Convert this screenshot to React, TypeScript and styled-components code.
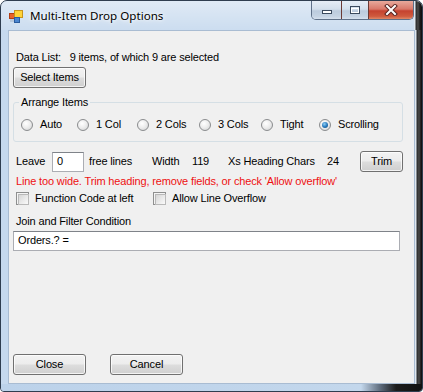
import React from "react";
import styled, { createGlobalStyle } from "styled-components";

const Global = createGlobalStyle`
  html, body { margin: 0; padding: 0; background: #ffffff; }
  * { box-sizing: border-box; }
`;

const Window = styled.div`
  width: 423px;
  height: 392px;
  border: 1px solid #2f3d4f;
  border-radius: 7px 7px 4px 4px;
  overflow: hidden;
  display: flex;
  flex-direction: column;
  background: #c6d9ee;
`;

const TitleBar = styled.div`
  height: 29px;
  display: flex;
  align-items: flex-start;
  background: linear-gradient(to bottom, rgba(255,255,255,0.45), rgba(255,255,255,0.1));
`;

const TitleIcon = styled.svg`
  width: 14px;
  height: 13px;
  margin: 9px 0 0 8px;
  flex: none;
`;

const TitleText = styled.div`
  font-family: "Noto Sans", "Open Sans", sans-serif;
  font-size: 11.6px;
  line-height: 16px;
  margin: 7px 0 0 7px;
  color: #000;
  text-shadow: 0 0 6px #ffffff, 0 0 3px #ffffff;
`;

const CaptionGroup = styled.div`
  margin-left: auto;
  display: flex;
  height: 19px;
  border: 1px solid #5f7088;
  border-top: none;
  border-radius: 0 0 5px 5px;
  overflow: hidden;
`;

const CaptionButton = styled.div<{ $w: number; $close?: boolean }>`
  width: ${(p) => p.$w}px;
  height: 100%;
  display: flex;
  align-items: center;
  justify-content: center;
  & + & { border-left: 1px solid ${(p) => (p.$close ? "#6b3a35" : "#8093ab")}; }
  background: ${(p) =>
    p.$close
      ? "linear-gradient(to bottom, #e8a99c 0%, #d9786a 45%, #c5422f 55%, #cf5a3e 85%, #e08866 100%)"
      : "linear-gradient(to bottom, #e6edf6 0%, #d3dfec 45%, #bccbdd 55%, #c5d3e3 85%, #d6e1ee 100%)"};
`;

const DarkEdge = styled.div<{ $w: number; $h?: number }>`
  width: ${(p) => p.$w}px;
  height: ${(p) => (p.$h ? `${p.$h}px` : "100%")};
  flex: none;
  align-self: stretch;
  background: linear-gradient(to right, #dfe8f1 0, #dfe8f1 1px, #2b2b2b 2px, #4a4a4a 4px, #1a1a1a 6px, #0c0c0c 100%);
`;

const Middle = styled.div`
  display: flex;
  height: 354px;
`;

const LeftFrame = styled.div`
  width: 7px;
  flex: none;
`;

const Client = styled.div`
  width: 407px;
  height: 354px;
  flex: none;
  background: #f0f0f0;
  border: 1px solid #a9bcd2;
  padding-left: 4px;
  display: flex;
  flex-direction: column;
  font-family: "Liberation Sans", Arial, sans-serif;
  font-size: 11px;
  letter-spacing: -0.15px;
  color: #000;
`;

const BottomFrame = styled.div`
  height: 7px;
  background: linear-gradient(to right, #bcd2ea 0, #c3d7ec 360px, #5b6878 380px, #1c1c1c 395px, #111 100%);
`;

const TextLine = styled.div<{ $mt: number; $red?: boolean }>`
  margin-top: ${(p) => p.$mt}px;
  padding-left: 3px;
  height: 13px;
  line-height: 13px;
  white-space: pre;
  color: ${(p) => (p.$red ? "#ee1111" : "#000")};
`;

const Button = styled.div<{ $w: number; $mt?: number }>`
  width: ${(p) => p.$w}px;
  height: 21px;
  margin-top: ${(p) => p.$mt ?? 0}px;
  flex: none;
  border: 1px solid #707070;
  border-radius: 3px;
  display: flex;
  align-items: center;
  justify-content: center;
  line-height: 13px;
  background: linear-gradient(to bottom, #f3f3f3 0%, #ececec 48%, #dddddd 52%, #cfcfcf 100%);
  box-shadow: inset 0 0 0 1px rgba(255, 255, 255, 0.75);
`;

const GroupBox = styled.div`
  position: relative;
  margin-top: 14px;
  width: 390px;
  height: 40px;
  border: 1px solid #d5dfe5;
  border-radius: 3px;
  padding: 15px 0 0 7px;
`;

const GroupLabel = styled.div`
  position: absolute;
  top: -7px;
  left: 5px;
  padding: 0 2px;
  background: #f0f0f0;
  line-height: 13px;
`;

const RadioRow = styled.div`
  display: flex;
  height: 13px;
  align-items: center;
`;

const RadioItem = styled.div<{ $w?: number }>`
  width: ${(p) => (p.$w ? `${p.$w}px` : "auto")};
  flex: none;
  display: flex;
  align-items: center;
  gap: 7px;
  line-height: 13px;
`;

const RadioCircle = styled.div<{ $on?: boolean }>`
  width: 12px;
  height: 12px;
  border-radius: 50%;
  border: 1px solid #8a8c8e;
  background: radial-gradient(circle at 40% 35%, #ffffff 0%, #eeeeee 45%, #cfd0d1 100%);
  display: flex;
  align-items: center;
  justify-content: center;
  &::after {
    content: "";
    display: ${(p) => (p.$on ? "block" : "none")};
    width: 6px;
    height: 6px;
    border-radius: 50%;
    background: radial-gradient(circle at 40% 35%, #8fd0f5 0%, #2a7cc0 50%, #0d3f6e 100%);
  }
`;

const FieldRow = styled.div`
  margin-top: 9px;
  height: 21px;
  display: flex;
  align-items: center;
  padding-left: 3px;
`;

const Cell = styled.div<{ $w: number }>`
  width: ${(p) => p.$w}px;
  flex: none;
  line-height: 13px;
  white-space: pre;
`;

const NumBox = styled.div`
  width: 32px;
  height: 20px;
  border: 1px solid #abadb3;
  border-top-color: #7f8389;
  background: #fff;
  padding: 2px 0 0 4px;
  line-height: 13px;
`;

const CheckRow = styled.div`
  margin-top: 4px;
  height: 13px;
  display: flex;
  align-items: center;
  padding-left: 3px;
`;

const CheckItem = styled.div<{ $w?: number }>`
  width: ${(p) => (p.$w ? `${p.$w}px` : "auto")};
  flex: none;
  display: flex;
  align-items: center;
  gap: 6px;
  line-height: 13px;
`;

const CheckBox = styled.div`
  width: 13px;
  height: 13px;
  border: 1px solid #8e8f8f;
  background: #f4f4f4;
  padding: 1px;
  &::after {
    content: "";
    display: block;
    width: 100%;
    height: 100%;
    border: 1px solid #b9b9b9;
    background: linear-gradient(135deg, #d6d6d6 0%, #ececec 60%, #fafafa 100%);
  }
`;

const TextInput = styled.div`
  margin-top: 3px;
  width: 387px;
  height: 20px;
  border: 1px solid #abadb3;
  border-top-color: #7f8389;
  background: #fff;
  padding: 2px 0 0 4px;
  line-height: 13px;
  white-space: pre;
`;

const ButtonRow = styled.div`
  margin-top: auto;
  margin-bottom: 8px;
  display: flex;
  gap: 24px;
`;

const radios = [
  { label: "Auto", w: 56 },
  { label: "1 Col", w: 60 },
  { label: "2 Cols", w: 62 },
  { label: "3 Cols", w: 62 },
  { label: "Tight", w: 58 },
  { label: "Scrolling", w: 0, on: true },
];

export default function App() {
  return (
    <>
      <Global />
      <Window>
        <TitleBar>
          <TitleIcon viewBox="0 0 14 13">
            <rect x="0.5" y="3.5" width="5" height="5" fill="#e8622a" stroke="#b23c12" strokeWidth="1" />
            <rect x="5.5" y="0.5" width="8" height="7" fill="#ffd338" stroke="#c9941a" strokeWidth="1" />
            <rect x="5.5" y="7.5" width="5" height="5" fill="#4b86d0" stroke="#2a5b9e" strokeWidth="1" />
            <rect x="1" y="9" width="4" height="3" fill="#b9c9dc" />
          </TitleIcon>
          <TitleText>Multi-Item Drop Options</TitleText>
          <CaptionGroup>
            <CaptionButton $w={29}>
              <svg width="12" height="10" viewBox="0 0 12 10">
                <rect x="1.5" y="5.5" width="9" height="3" fill="#ffffff" stroke="#3b4a5e" strokeWidth="1" />
              </svg>
            </CaptionButton>
            <CaptionButton $w={27}>
              <svg width="12" height="10" viewBox="0 0 12 10">
                <rect x="1.5" y="1.5" width="9" height="7" fill="none" stroke="#3b4a5e" strokeWidth="1" />
                <rect x="2.5" y="3.5" width="7" height="4" fill="none" stroke="#ffffff" strokeWidth="1" />
              </svg>
            </CaptionButton>
            <CaptionButton $w={45} $close>
              <svg width="14" height="12" viewBox="0 0 14 12">
                <path d="M3 2 L11 10 M11 2 L3 10" stroke="#5a2420" strokeWidth="4" strokeLinecap="square" />
                <path d="M3 2 L11 10 M11 2 L3 10" stroke="#ffffff" strokeWidth="2" strokeLinecap="square" />
              </svg>
            </CaptionButton>
          </CaptionGroup>
          <DarkEdge $w={8} />
        </TitleBar>
        <Middle>
          <LeftFrame />
          <Client>
            <TextLine $mt={20}>{"Data List:   9 items, of which 9 are selected"}</TextLine>
            <Button $w={73} $mt={3}>Select Items</Button>
            <GroupBox>
              <GroupLabel>Arrange Items</GroupLabel>
              <RadioRow>
                {radios.map((r) => (
                  <RadioItem key={r.label} $w={r.w || undefined}>
                    <RadioCircle $on={r.on} />
                    <span>{r.label}</span>
                  </RadioItem>
                ))}
              </RadioRow>
            </GroupBox>
            <FieldRow>
              <Cell $w={36}>Leave</Cell>
              <Cell $w={37}>
                <NumBox>0</NumBox>
              </Cell>
              <Cell $w={63}>free lines</Cell>
              <Cell $w={40}>Width</Cell>
              <Cell $w={36}>119</Cell>
              <Cell $w={99}>Xs Heading Chars</Cell>
              <Cell $w={33}>24</Cell>
              <Button $w={43}>Trim</Button>
            </FieldRow>
            <TextLine $mt={3} $red>
              {"Line too wide. Trim heading, remove fields, or check 'Allow overflow'"}
            </TextLine>
            <CheckRow>
              <CheckItem $w={137}>
                <CheckBox />
                <span>Function Code at left</span>
              </CheckItem>
              <CheckItem>
                <CheckBox />
                <span>Allow Line Overflow</span>
              </CheckItem>
            </CheckRow>
            <TextLine $mt={10}>Join and Filter Condition</TextLine>
            <TextInput>{"Orders.? ="}</TextInput>
            <ButtonRow>
              <Button $w={73}>Close</Button>
              <Button $w={73}>Cancel</Button>
            </ButtonRow>
          </Client>
          <DarkEdge $w={7} />
        </Middle>
        <BottomFrame />
      </Window>
    </>
  );
}
